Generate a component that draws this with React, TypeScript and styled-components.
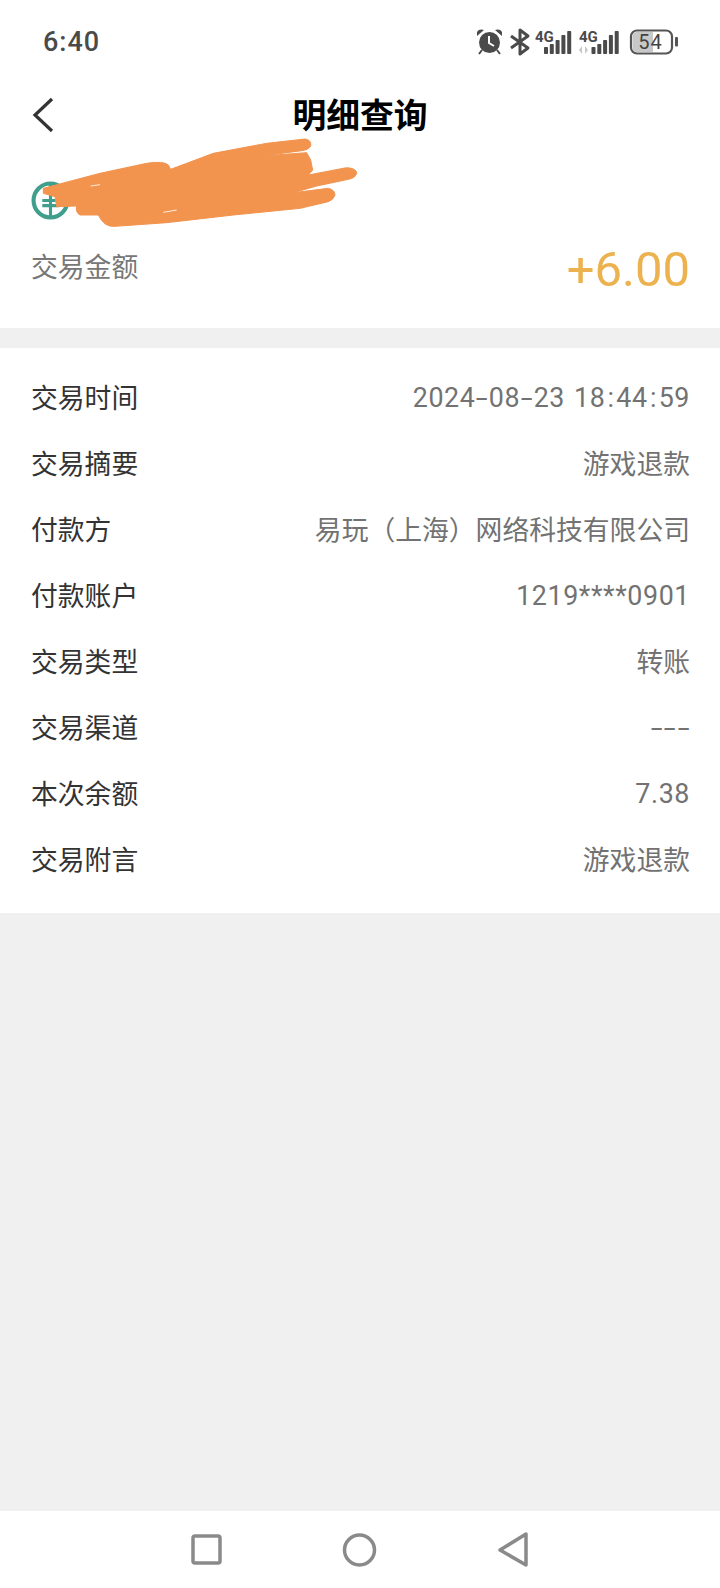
import React from "react";
import styled, { createGlobalStyle } from "styled-components";

const Global = createGlobalStyle`
  html, body { margin: 0; padding: 0; background: #f0f0f0; }
  #root { width: 720px; }
`;

const Phone = styled.div`
  position: relative;
  width: 720px;
  height: 1588px;
  display: flex;
  flex-direction: column;
  background: #f0f0f0;
  overflow: hidden;
  font-family: Roboto, "Noto Sans CJK SC", sans-serif;
`;

const Top = styled.header`
  background: #fff;
  height: 328px;
  display: flex;
  flex-direction: column;
`;

const StatusBar = styled.div`
  height: 83px;
  padding: 0 40px 0 43px;
  display: flex;
  align-items: center;
  justify-content: space-between;
`;

const Clock = styled.span`
  font-size: 27px;
  font-weight: 500;
  letter-spacing: 1px;
  color: #4a4a4a;
`;

const Nav = styled.div`
  position: relative;
  height: 64px;
  box-sizing: border-box;
  padding-bottom: 4px;
  display: flex;
  align-items: center;
  justify-content: center;
`;

const Back = styled.svg`
  position: absolute;
  left: 31px;
  top: 14px;
`;

const Title = styled.h1`
  margin: 0;
  font-size: 33.8px;
  font-weight: 700;
  color: #000;
  font-family: "Noto Sans CJK SC", sans-serif;
`;

const LogoRow = styled.div`
  height: 53px;
  margin-top: 27px;
  padding-left: 31px;
  display: flex;
  align-items: center;
`;

const AmountRow = styled.div`
  padding: 14px 30px 0 31px;
  display: flex;
  align-items: center;
  justify-content: space-between;
`;

const AmountLabel = styled.span`
  font-size: 26.8px;
  color: #777;
  font-family: "Noto Sans CJK SC", sans-serif;
  position: relative;
  top: -4px;
`;

const Amount = styled.span`
  font-size: 49px;
  font-weight: 400;
  color: #ecb24f;
`;

const Details = styled.section`
  margin-top: 20px;
  background: #fff;
  height: 565px;
  padding-top: 15px;
  box-sizing: border-box;
`;

const Row = styled.div`
  height: 66px;
  padding: 0 30px 0 31px;
  display: flex;
  align-items: center;
  justify-content: space-between;
  font-size: 26.8px;
`;

const RowLabel = styled.span`
  color: #333;
  font-family: "Noto Sans CJK SC", sans-serif;
`;

const RowValue = styled.span<{ $latin: boolean }>`
  color: #727272;
  letter-spacing: ${(p) => (p.$latin ? "0.6px" : "0")};
  padding-top: ${(p) => (p.$latin ? "4px" : "0")};
  font-family: Roboto, "Noto Sans CJK SC", sans-serif;
`;

const Sep = styled.span`
  display: inline-block;
  width: 13.5px;
  text-align: center;
  letter-spacing: 0;
  transform: scaleX(1.6);
`;

const Gap = styled.span`
  display: inline-block;
  width: 9px;
`;

const Colon = styled.span`
  display: inline-block;
  width: 11px;
  text-align: center;
  letter-spacing: 0;
`;

const BottomBar = styled.nav`
  position: absolute;
  left: 0;
  right: 0;
  bottom: 0;
  height: 77px;
  background: #fff;
  display: flex;
  align-items: center;
  justify-content: center;
`;

const Smear = styled.svg`
  position: absolute;
  left: 0;
  top: 80px;
  pointer-events: none;
`;

const rows: [string, string][] = [
  ["交易时间", "2024-08-23 18:44:59"],
  ["交易摘要", "游戏退款"],
  ["付款方", "易玩（上海）网络科技有限公司"],
  ["付款账户", "1219****0901"],
  ["交易类型", "转账"],
  ["交易渠道", "---"],
  ["本次余额", "7.38"],
  ["交易附言", "游戏退款"],
];

const renderValue = (value: string) =>
  value.split(/([-: ])/).map((part, i) => {
    if (part === "-") return <Sep key={i}>-</Sep>;
    if (part === ":") return <Colon key={i}>:</Colon>;
    if (part === " ") return <Gap key={i}> </Gap>;
    return part;
  });

const Signal = ({ x }: { x: number }) => (
  <g fill="#4a4a4a">
    <rect x={x} y={21} width={4} height={7} rx={0.8} />
    <rect x={x + 5.8} y={18} width={4} height={10} rx={0.8} />
    <rect x={x + 11.6} y={14} width={4} height={14} rx={0.8} />
    <rect x={x + 17.4} y={9} width={4} height={19} rx={0.8} />
    <rect x={x + 23.2} y={5} width={4} height={23} rx={0.8} />
  </g>
);

const StatusIcons = () => (
  <svg width="204" height="32" viewBox="0 0 204 32">
    <g fill="#4a4a4a">
      <circle cx="13.5" cy="16.5" r="10.5" />
      <path d="M1 10 L8 4 Q3 2.5 1 6 Z M26 10 L19 4 Q24 2.5 26 6 Z" />
      <path d="M6 24 L3 28 M21 24 L24 28" stroke="#4a4a4a" strokeWidth="2" />
    </g>
    <path d="M13 10 V17 L18 20" stroke="#fff" strokeWidth="2" fill="none" />
    <path
      d="M35 10 L52 22 L44 28 V4 L52 10 L35 22"
      stroke="#4a4a4a"
      strokeWidth="3"
      fill="none"
      strokeLinejoin="round"
    />
    <text x="59" y="16" fontSize="15" fontWeight="700" fill="#4a4a4a" fontFamily="Roboto, sans-serif">4G</text>
    <Signal x={68} />
    <text x="103" y="16" fontSize="15" fontWeight="700" fill="#4a4a4a" fontFamily="Roboto, sans-serif">4G</text>
    <path d="M106 20 V28 L103 24 Z M109 20 V28 L112 24 Z" fill="#c8c8c8" />
    <Signal x={115.5} />
    <rect x="155" y="4.5" width="41" height="23" rx="6" fill="#fff" stroke="#555" strokeWidth="2.2" />
    <path d="M161 6 H177 V26 H161 Q156.5 26 156.5 21.5 V10.5 Q156.5 6 161 6 Z" fill="#c8c8c8" />
    <text x="174.5" y="23" textAnchor="middle" fontSize="20" letterSpacing="1" fill="#444" fontFamily="Roboto, sans-serif">54</text>
    <rect x="199" y="11" width="3" height="9.5" rx="1" fill="#555" />
  </svg>
);

export default function App() {
  return (
    <Phone>
      <Global />
      <Top>
        <StatusBar>
          <Clock>6:40</Clock>
          <StatusIcons />
        </StatusBar>
        <Nav>
          <Back width="24" height="36" viewBox="0 0 24 36">
            <path d="M21 2 L4 18 L21 34" fill="none" stroke="#333" strokeWidth="3.2" />
          </Back>
          <Title>明细查询</Title>
        </Nav>
        <LogoRow>
          <svg width="39" height="39" viewBox="0 0 38 38">
            <circle cx="19" cy="19" r="16.5" fill="none" stroke="#3f9f8c" strokeWidth="4" />
            <path d="M19 3 V35 M11 19 H27 M11 24 H27" stroke="#3f9f8c" strokeWidth="3" />
          </svg>
        </LogoRow>
        <AmountRow>
          <AmountLabel>交易金额</AmountLabel>
          <Amount>+6.00</Amount>
        </AmountRow>
      </Top>
      <Details>
        {rows.map(([label, value]) => (
          <Row key={label}>
            <RowLabel>{label}</RowLabel>
            <RowValue $latin={/^[\x00-\x7f]+$/.test(value)}>{renderValue(value)}</RowValue>
          </Row>
        ))}
      </Details>
      <Smear width="380" height="220" viewBox="0 0 1140 660">
        <path
          d="M130 325 L300 280 L440 250 Q490 242 505 255 L512 268 L640 220 L800 190 L915 177 Q935 180 932 198 Q925 210 905 212 L785 228 L920 218 L932 240 L938 270 L925 285 L1040 263 Q1070 265 1070 280 Q1065 295 1045 298 L950 318 L880 338 L985 325 Q1005 330 1005 345 Q1000 360 985 365 L900 385 L700 405 L500 428 L345 439 Q312 442 295 405 L240 405 Q226 398 230 378 L170 380 L165 350 L130 340 Z"
          fill="#f2934e"
          stroke="#f2934e"
          strokeWidth="3"
          strokeLinejoin="round"
        />
        <path d="M272 318 L300 314 M490 397 L530 390" stroke="#fff" strokeWidth="2.5" />
      </Smear>
      <BottomBar>
        <svg width="350" height="40" viewBox="0 0 350 40">
          <g fill="none" stroke="#8a8a8a" strokeWidth="3.5" strokeLinejoin="round">
            <rect x="8" y="6" width="27" height="27" rx="2" />
            <circle cx="174.5" cy="20" r="15" />
            <path d="M341 4 V35 L315 20 Z" />
          </g>
        </svg>
      </BottomBar>
    </Phone>
  );
}
